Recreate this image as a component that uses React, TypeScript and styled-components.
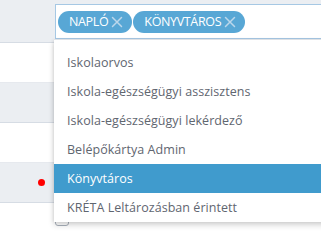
import React from 'react';
import styled, { createGlobalStyle } from 'styled-components';

const GlobalStyle = createGlobalStyle`
  body {
    margin: 0;
    background: #fff;
    font-family: 'Open Sans', 'Liberation Sans', sans-serif;
    overflow: hidden;
  }
`;

const Page = styled.div`
  position: relative;
  width: 321px;
  height: 240px;
  overflow: hidden;
`;

const Row = styled.div<{ $gray?: boolean; $first?: boolean }>`
  display: flex;
  align-items: center;
  height: ${(p) => (p.$first ? 42 : 39)}px;
  background: ${(p) => (p.$gray ? '#ebeef2' : '#fff')};
  border-bottom: 1px solid ${(p) => (p.$gray ? '#d6dce4' : '#e6e9ee')};
`;

const LeadCell = styled.div`
  width: 55px;
  flex-shrink: 0;
  display: flex;
  justify-content: flex-end;
  padding-right: 10px;
  box-sizing: border-box;
`;

const Dot = styled.span`
  width: 7px;
  height: 7px;
  border-radius: 50%;
  background: #ff0000;
`;

const CheckCell = styled.div`
  align-self: flex-start;
  padding-top: 9px;
`;

const Checkbox = styled.span`
  display: block;
  width: 12px;
  height: 12px;
  border: 1px solid #a9b1bb;
  border-radius: 3px;
  background: #fff;
`;

const SelectBox = styled.div`
  flex: 1;
  align-self: flex-start;
  margin-top: 4px;
  height: 33px;
  display: flex;
  align-items: center;
  gap: 1px;
  padding-left: 2px;
  background: #fff;
  border: 1px solid #a6c8e4;
  border-right: none;
`;

const Tag = styled.span`
  display: inline-flex;
  align-items: center;
  height: 22px;
  padding: 0 9px 0 11px;
  border-radius: 11px;
  background: #58a7d5;
  color: #fff;
  font-size: 12.5px;
  letter-spacing: -0.35px;
`;

const TagClose = styled.span`
  margin-left: 3px;
  display: inline-flex;
  color: #bcd7eb;
`;

const Dropdown = styled.ul`
  position: absolute;
  top: 40px;
  left: 54px;
  right: -20px;
  margin: 0;
  padding: 8px 0 0;
  list-style: none;
  background: #fff;
  box-shadow: 0 3px 6px rgba(0, 0, 0, 0.18), -1px 0 3px rgba(0, 0, 0, 0.08);
`;

const Option = styled.li<{ $active?: boolean }>`
  height: 29px;
  line-height: 29px;
  padding-left: 13px;
  font-size: 12.5px;
  letter-spacing: 0.05px;
  color: ${(p) => (p.$active ? '#fff' : '#5f6670')};
  background: ${(p) => (p.$active ? '#409bcd' : 'transparent')};
`;

const CloseIcon = () => (
  <svg width="12" height="12" viewBox="0 0 12 12">
    <path d="M1.5 1.5 L10.5 10.5 M10.5 1.5 L1.5 10.5" stroke="currentColor" strokeWidth="1.5" strokeLinecap="round" />
  </svg>
);

const tags = ['NAPLÓ', 'KÖNYVTÁROS'];

const options = [
  'Iskolaorvos',
  'Iskola-egészségügyi asszisztens',
  'Iskola-egészségügyi lekérdező',
  'Belépőkártya Admin',
  'Könyvtáros',
  'KRÉTA Leltározásban érintett',
];

const App: React.FC = () => {
  return (
    <Page>
      <GlobalStyle />
      <Row $gray $first>
        <LeadCell />
        <SelectBox>
          {tags.map((t) => (
            <Tag key={t}>
              {t}
              <TagClose>
                <CloseIcon />
              </TagClose>
            </Tag>
          ))}
        </SelectBox>
      </Row>
      <Row />
      <Row $gray />
      <Row />
      <Row $gray>
        <LeadCell>
          <Dot />
        </LeadCell>
      </Row>
      <Row>
        <LeadCell />
        <CheckCell>
          <Checkbox />
        </CheckCell>
      </Row>
      <Dropdown>
        {options.map((o) => (
          <Option key={o} $active={o === 'Könyvtáros'}>
            {o}
          </Option>
        ))}
      </Dropdown>
    </Page>
  );
};

export default App;
